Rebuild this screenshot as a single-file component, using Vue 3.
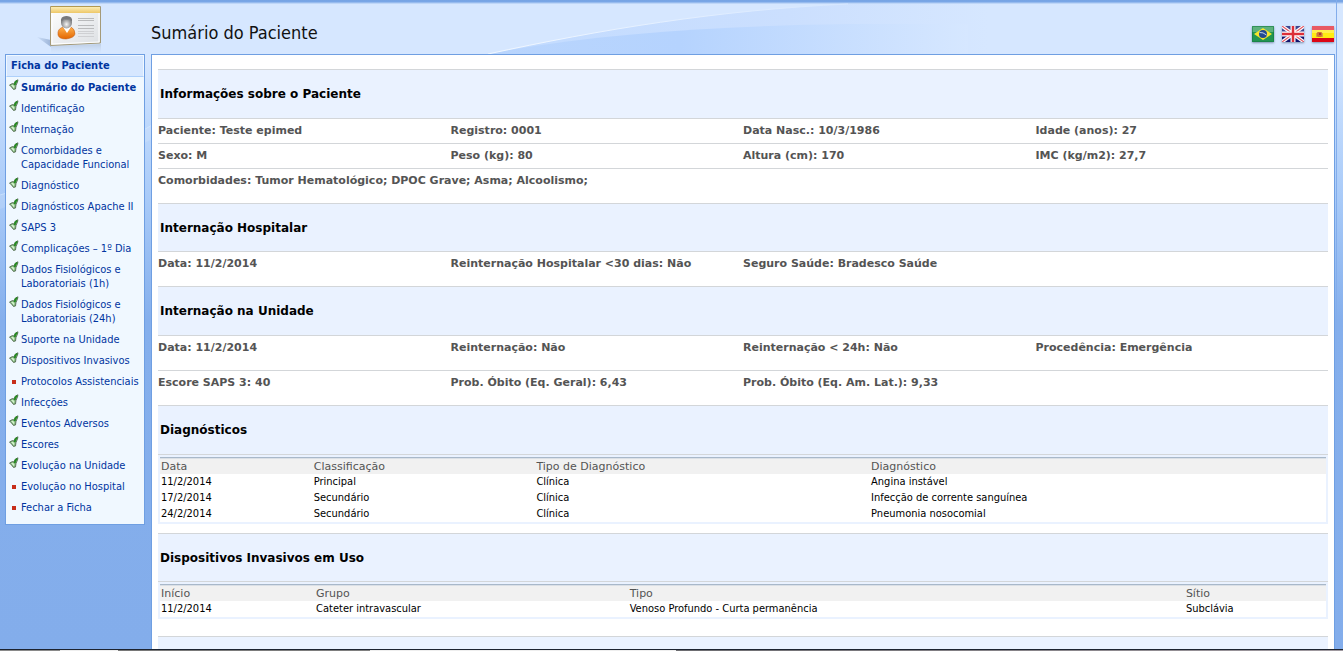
<script setup>
const menu = [
  ['Sumário do Paciente', 'check', true],
  ['Identificação', 'check'],
  ['Internação', 'check'],
  ['Comorbidades e Capacidade Funcional', 'check'],
  ['Diagnóstico', 'check'],
  ['Diagnósticos Apache II', 'check'],
  ['SAPS 3', 'check'],
  ['Complicações – 1º Dia', 'check'],
  ['Dados Fisiológicos e Laboratoriais (1h)', 'check'],
  ['Dados Fisiológicos e Laboratoriais (24h)', 'check'],
  ['Suporte na Unidade', 'check'],
  ['Dispositivos Invasivos', 'check'],
  ['Protocolos Assistenciais', 'dot'],
  ['Infecções', 'check'],
  ['Eventos Adversos', 'check'],
  ['Escores', 'check'],
  ['Evolução na Unidade', 'check'],
  ['Evolução no Hospital', 'dot'],
  ['Fechar a Ficha', 'dot'],
]
const sections = [
  {
    title: 'Informações sobre o Paciente',
    kind: 'info',
    rows: [
      ['Paciente: Teste epimed', 'Registro: 0001', 'Data Nasc.: 10/3/1986', 'Idade (anos): 27'],
      ['Sexo: M', 'Peso (kg): 80', 'Altura (cm): 170', 'IMC (kg/m2): 27,7'],
      ['Comorbidades: Tumor Hematológico; DPOC Grave; Asma; Alcoolismo;'],
    ],
  },
  {
    title: 'Internação Hospitalar',
    kind: 'hospital',
    rows: [['Data: 11/2/2014', 'Reinternação Hospitalar <30 dias: Não', 'Seguro Saúde: Bradesco Saúde']],
  },
  {
    title: 'Internação na Unidade',
    kind: 'unit',
    rows: [
      ['Data: 11/2/2014', 'Reinternação: Não', 'Reinternação < 24h: Não', 'Procedência: Emergência'],
      ['Escore SAPS 3: 40', 'Prob. Óbito (Eq. Geral): 6,43', 'Prob. Óbito (Eq. Am. Lat.): 9,33'],
    ],
  },
]
const tables = [
  {
    title: 'Diagnósticos',
    kind: 'diag',
    head: ['Data', 'Classificação', 'Tipo de Diagnóstico', 'Diagnóstico'],
    rows: [
      ['11/2/2014', 'Principal', 'Clínica', 'Angina instável'],
      ['17/2/2014', 'Secundário', 'Clínica', 'Infecção de corrente sanguínea'],
      ['24/2/2014', 'Secundário', 'Clínica', 'Pneumonia nosocomial'],
    ],
  },
  {
    title: 'Dispositivos Invasivos em Uso',
    kind: 'disp',
    head: ['Início', 'Grupo', 'Tipo', 'Sítio'],
    rows: [['11/2/2014', 'Cateter intravascular', 'Venoso Profundo - Curta permanência', 'Subclávia']],
  },
]
</script>

<template>
  <div class="page">
    <svg class="swoosh" viewBox="0 0 500 54" preserveAspectRatio="none" aria-hidden="true">
      <defs>
        <linearGradient id="sw1" x1="0" x2="1"><stop offset="0" stop-color="#c2dbff" /><stop offset=".6" stop-color="#cbdffe" /><stop offset="1" stop-color="#d6e7ff" /></linearGradient>
        <linearGradient id="sw2" x1="0" x2="1"><stop offset="0" stop-color="#b9d5fd" /><stop offset=".4" stop-color="#b5d3fe" /><stop offset="1" stop-color="#d6e7ff" /></linearGradient>
        <linearGradient id="sw3" x1="0" x2="1"><stop offset="0" stop-color="#f2f8ff" /><stop offset="1" stop-color="#d6e7ff" /></linearGradient>
      </defs>
      <path d="M0 54C110 30 230 10 360 4H500V54Z" fill="url(#sw1)" />
      <path d="M0 54C110 33 230 26 360 24H480V54Z" fill="url(#sw2)" />
      <path d="M0 54C110 30 230 10 360 4" fill="none" stroke="url(#sw3)" />
    </svg>
    <svg class="wave" viewBox="0 0 152 90" aria-hidden="true">
      <path d="M0 70Q70 50 152 0V14Q70 60 0 84Z" fill="#fff" opacity=".12" />
      <path d="M0 70Q70 50 152 0" fill="none" stroke="#d6e9ff" opacity=".6" />
    </svg>

    <div class="frame">
      <header class="top">
        <div class="logo">
          <svg width="66" height="50" viewBox="0 0 66 50" role="img" aria-label="Ficha">
            <defs>
              <linearGradient id="gold" x2="0" y2="1"><stop stop-color="#fff3c0" /><stop offset="1" stop-color="#edc768" /></linearGradient>
              <linearGradient id="card" x2="1" y2="1"><stop stop-color="#fff" /><stop offset="1" stop-color="#dcdfe3" /></linearGradient>
              <linearGradient id="orange" x2="0" y2="1"><stop stop-color="#ffb04c" /><stop offset="1" stop-color="#e26500" /></linearGradient>
              <radialGradient id="head" cx=".5" cy=".65"><stop stop-color="#f4f4f4" /><stop offset="1" stop-color="#808183" /></radialGradient>
              <linearGradient id="refl" x2="0" y2="1"><stop stop-color="#a5b5cb" stop-opacity=".5" /><stop offset="1" stop-color="#c9daf0" stop-opacity="0" /></linearGradient>
              <linearGradient id="shade" x1="0" x2="1"><stop stop-color="#cddff8" /><stop offset="1" stop-color="#9cb4d8" /></linearGradient>
            </defs>
            <path d="M0 32 14 35V42Z" fill="url(#shade)" />
            <path d="M14 41 64 39V49H14Z" fill="url(#refl)" />
            <path d="M13.500 1.500H63.500V38L13.500 40.500Z" fill="url(#card)" stroke="#a49a79" />
            <path d="M14 1H63V8H14Z" fill="url(#gold)" />
            <path d="M14 1.500H63" stroke="#b39951" />
            <path d="M15 8V39L62 37V8" fill="none" stroke="#fff" />
            <path d="M21 30Q20 24 26 22L30 27 34 22Q38 24 38 29Q37 33 29 34Q22 34 21 30Z" fill="url(#orange)" stroke="#bc5710" stroke-width=".5" />
            <path d="M26 22 30 28 34 22Z" fill="#fff" />
            <ellipse cx="29.500" cy="17.500" rx="5.500" ry="6" fill="url(#head)" />
            <path d="M24 17Q23 11 29.500 11Q36 11 35 17L33 14Q29 15 27 14Z" fill="#77797c" />
            <path d="M41 13.500H57M41 15.500H57M41 20.500H57M41 23.500H57" stroke="#b9babc" />
            <path d="M41 26.500H57M41 28.500H57M41 31.500H57" stroke="#cfd0d3" />
          </svg>
        </div>
        <h1>Sumário do Paciente</h1>
        <nav class="flags" aria-label="Idioma">
          <a href="#pt" aria-label="Português">
            <svg width="22" height="16" viewBox="0 0 22 16"><rect width="22" height="16" fill="#229552" /><rect width="22" height="6" fill="#5cb17d" /><path d="M2 8 11 2 20 8 11 14Z" fill="#f7e52b" /><circle cx="11" cy="8" r="4" fill="#214a91" /><path d="M7.500 6.500Q11 6 14.500 9" fill="none" stroke="#bed3e9" /><path d="M.5 .5H21.500V15.500H.5Z" fill="none" stroke="#167b45" opacity=".6" /></svg>
          </a>
          <a href="#en" aria-label="English">
            <svg width="22" height="16" viewBox="0 0 22 16"><rect width="22" height="16" fill="#11136e" /><rect width="22" height="7" fill="#3d4690" /><path d="M0 0 22 16M22 0 0 16" stroke="#fff" stroke-width="3.500" /><path d="M0 0 22 16M22 0 0 16" stroke="#e35a65" stroke-width="1.200" /><path d="M11 0V16M0 8H22" stroke="#fff" stroke-width="5" /><path d="M11 0V16M0 8H22" stroke="#dc2f38" stroke-width="2.500" /></svg>
          </a>
          <a href="#es" aria-label="Español">
            <svg width="22" height="16" viewBox="0 0 22 16"><rect width="22" height="16" fill="#dc0716" /><rect width="22" height="4" fill="#e85a63" /><rect y="4" width="22" height="8" fill="#ffec12" /><rect y="4" width="22" height="3" fill="#fff04e" /><rect x="5" y="6" width="5" height="5" rx="1" fill="#cf7635" /><path d="M4.500 7V11M10.500 7V11" stroke="#d9a548" /><path d="M7 7H9V9H7Z" fill="#a83739" /></svg>
          </a>
        </nav>
      </header>

      <div class="body">
        <aside class="side">
          <h2>Ficha do Paciente</h2>
          <ul>
            <li v-for="m in menu" :key="m[0]">
              <svg v-if="m[1] === 'check'" class="mark" width="10" height="12" viewBox="0 0 10 12" aria-hidden="true">
                <path d="M.5 6 3.500 4.500 5 5Q5.500 1.500 9 .8L8.500 3 7 6.500 6.500 10 4.500 10.500 2.500 8Z" fill="#7fb27a" stroke="#4c6348" stroke-width=".8" />
                <path d="M2 6.200 4 5.800 5.500 7.500 5 9.500 3.500 7.800Z" fill="#d2f5cb" />
                <path d="M5.700 6Q6 2.800 8.200 1.800" fill="none" stroke="#238c20" stroke-width="1.800" />
              </svg>
              <span v-else class="dot"></span>
              <a href="#" :class="{ current: m[2] }">{{ m[0] }}</a>
            </li>
          </ul>
        </aside>

        <main class="panel">
          <section v-for="s in sections" :key="s.title" :class="s.kind">
            <h3>{{ s.title }}</h3>
            <div v-for="(r, i) in s.rows" :key="i" class="row" :class="{ full: r.length === 1 }">
              <span v-for="c in r" :key="c">{{ c }}</span>
            </div>
          </section>
          <section v-for="t in tables" :key="t.title" :class="t.kind">
            <h3>{{ t.title }}</h3>
            <div class="grid">
              <table>
                <thead><tr><th v-for="h in t.head" :key="h" scope="col">{{ h }}</th></tr></thead>
                <tbody><tr v-for="r in t.rows" :key="r[0]"><td v-for="c in r" :key="c">{{ c }}</td></tr></tbody>
              </table>
            </div>
          </section>
          <div class="next"></div>
        </main>
      </div>
    </div>
    <div class="taskbar"></div>
  </div>
</template>

<style>
body { margin: 0; }
</style>

<style scoped>
* { box-sizing: border-box; }
h1, h2, h3, ul { margin: 0; padding: 0; font-weight: normal; }
.page {
  position: relative;
  display: flex;
  flex-direction: column;
  height: 100vh;
  overflow: hidden;
  background: linear-gradient(#d6e7ff 0, #d6e7ff 60px, #c2dbfd 110px, #a8caf8 200px, #85afec 320px, #83adeb 100%);
  font-family: "DejaVu Sans Condensed", Tahoma, "DejaVu Sans", sans-serif;
  font-size: 11px;
}
.swoosh { position: absolute; left: 488px; top: 0; width: 500px; height: 54px; }
.wave { position: absolute; left: 0; top: 125px; width: 152px; }
.frame {
  position: relative;
  flex: 1;
  min-height: 0;
  display: flex;
  flex-direction: column;
  margin-right: 6px;
  padding-right: 1px;
  border-right: 1px solid #83adeb;
}
.page::before {
  content: "";
  position: absolute;
  inset: 0 0 auto;
  height: 4px;
  background: linear-gradient(#76a4e4 0, #7aa7e7 2px, #b4cff5 3px, #c8ddfa 4px);
}
.top { display: flex; height: 54px; flex: none; }
.logo { width: 151px; padding: 5px 0 0 37px; }
.logo svg { display: block; }
h1 { flex: 1; padding-top: 22px; font-size: 18px; line-height: 22px; color: #111; }
.flags { display: flex; gap: 8px; padding: 26px 1px 0 0; }
.flags a { height: 16px; box-shadow: 0 1px 2px #7c90ad; }
.flags svg { display: block; }
.body { flex: 1; min-height: 0; display: flex; align-items: flex-start; gap: 6px; padding-left: 5px; }
.side { width: 140px; flex: none; border: 1px solid #6f9fe2; background: #f0f8ff; padding-bottom: 6px; }
.side h2 { height: 22px; border: 1px solid #f0f8ff; border-bottom: 1px solid #aed0fb; background: #d6e7ff; padding-left: 4px; font-size: 11px; font-weight: bold; line-height: 19px; color: #0035a0; }
ul { list-style: none; }
li { display: flex; padding: 4px 0 3px 3px; line-height: 14px; }
.mark { flex: none; width: 10px; height: 12px; margin: -2px 2px 0 0; }
.dot { flex: none; width: 4px; height: 4px; margin: 5px 5px 0 3px; background: #c72e1b; }
li a { color: #0035a0; text-decoration: none; }
li a.current { font-weight: bold; white-space: nowrap; }
.panel {
  flex: 1;
  align-self: stretch;
  overflow: hidden;
  border: 1px solid #6f9fe2;
  border-bottom: 0;
  background: #fff;
  padding: 14px 6px 0;
}
h3 { height: 48px; border-top: 1px solid #d3d6d9; background: #eaf2ff; padding-left: 2px; font: bold 12px/48px "DejaVu Sans", Verdana, sans-serif; color: #000; }
.info h3, .unit h3, .diag h3 { height: 49px; }
.row { display: grid; grid-template-columns: repeat(4, 1fr); height: 25px; border-top: 1px solid #d3d6d9; font: bold 11px/24px "DejaVu Sans", Verdana, sans-serif; color: #545454; }
.row.full { grid-template-columns: 1fr; }
.row:last-child, .unit .row { height: 35px; }
.grid { padding: 2px; border-top: 1px solid #d3d6d9; margin-bottom: 9px; background: #eaf2ff; }
table { width: 100%; table-layout: fixed; border-collapse: separate; border-spacing: 0; border-top: 1px solid #a8b8ca; background: #fff; }
th { background: #f1f1f1; border-top: 1px solid #dbe0e6; color: #545454; text-align: left; font: 11px/15px "DejaVu Sans", Verdana, sans-serif; padding: 0 0 0 1px; }
td { line-height: 16px; padding: 0 0 0 1px; color: #000; }
.diag th:nth-child(1) { width: 13.1%; }
.diag th:nth-child(2) { width: 19.1%; }
.diag th:nth-child(3) { width: 28.7%; }
.disp th:nth-child(1) { width: 13.3%; }
.disp th:nth-child(2) { width: 26.9%; }
.disp th:nth-child(3) { width: 47.7%; }
.disp .grid { margin-bottom: 17px; }
.next { height: 40px; border-top: 1px solid #d3d6d9; background: #eaf2ff; }
.taskbar {
  position: relative;
  flex: none;
  height: 2px;
  border-top: 1px solid #1c2330;
  background: linear-gradient(90deg, #8a8a8a 60px, #eee 60px, #eee 118px, #777 118px, #808080 370px, #eee 370px, #eee 676px, #6c6c70 676px, #a09aa0 100%);
}
</style>
